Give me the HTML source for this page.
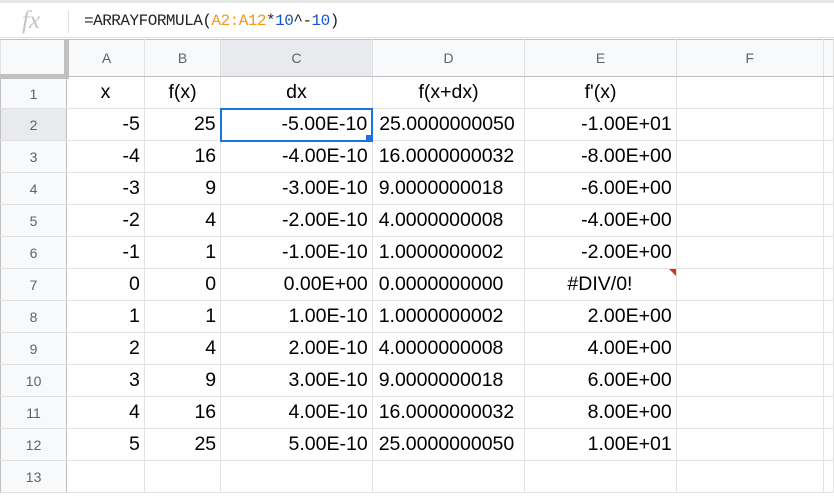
<!DOCTYPE html><html><head><style>
body{margin:0;width:834px;height:496px;overflow:hidden;background:#fff;font-family:"Liberation Sans",Arial,sans-serif;position:relative}
.fb{position:absolute;left:0;top:0;width:834px;height:38px;border-top:3px solid #e8e8e8;box-sizing:border-box;border-bottom:1px solid #e0e0e0}
.fx{position:absolute;left:22px;top:4px;font:italic 25px "Liberation Serif",serif;color:#c4c4c4}
.sep{position:absolute;left:68px;top:8px;width:1px;height:22px;background:#ddd}
.ft{position:absolute;left:84px;top:9px;font:16px "Liberation Mono","DejaVu Sans Mono",monospace;color:#222;letter-spacing:-0.5px}
table{position:absolute;left:0;top:39px;border-collapse:collapse;table-layout:fixed}
td{border:1px solid #e2e2e2;height:32px;padding:0 4px;font-size:19.5px;color:#000;text-align:right;white-space:nowrap;overflow:hidden;box-sizing:border-box}
tr.h td{background:#f8f9fa;color:#5f6368;font-size:14px;text-align:center;height:37px;border-color:#c0c0c0 #e0e0e0}
td.r{background:#f8f9fa;color:#5f6368;font-size:14px;text-align:center;border-color:#e0e0e0 #c0c0c0}
td.c{text-align:center}
td.l{text-align:left;padding-left:6px}
</style></head><body>
<div class="fb"><div class="fx">fx</div><div class="sep"></div><div class="ft">=ARRAYFORMULA(<span style="color:#f7981d">A2:A12</span>*<span style="color:#1155cc">10</span>^-<span style="color:#1155cc">10</span>)</div></div>
<table>
<colgroup><col style="width:68px"><col style="width:80px"><col style="width:78px"><col style="width:154px"><col style="width:153px"><col style="width:153px"><col style="width:153px"><col style="width:10px"></colgroup>
<tr class="h"><td style="border-right:5px solid #c0c0c0;border-bottom:5px solid #c0c0c0;background:#f8f9fa"></td><td>A</td><td>B</td><td style="background:#e8eaed">C</td><td>D</td><td>E</td><td>F</td><td></td></tr>
<tr><td class="r">1</td><td class="c">x</td><td class="c">f(x)</td><td class="c">dx</td><td class="c">f(x+dx)</td><td class="c">f'(x)</td><td></td><td></td></tr>
<tr><td class="r" style="background:#e8eaed">2</td><td>-5</td><td>25</td><td style="border:2px solid #1a73e8;position:relative">-5.00E-10<div style="position:absolute;right:-1px;bottom:-1px;width:6px;height:6px;background:#1a73e8"></div></td><td class="l">25.0000000050</td><td>-1.00E+01</td><td></td><td></td></tr>
<tr><td class="r">3</td><td>-4</td><td>16</td><td>-4.00E-10</td><td class="l">16.0000000032</td><td>-8.00E+00</td><td></td><td></td></tr>
<tr><td class="r">4</td><td>-3</td><td>9</td><td>-3.00E-10</td><td class="l">9.0000000018</td><td>-6.00E+00</td><td></td><td></td></tr>
<tr><td class="r">5</td><td>-2</td><td>4</td><td>-2.00E-10</td><td class="l">4.0000000008</td><td>-4.00E+00</td><td></td><td></td></tr>
<tr><td class="r">6</td><td>-1</td><td>1</td><td>-1.00E-10</td><td class="l">1.0000000002</td><td>-2.00E+00</td><td></td><td></td></tr>
<tr><td class="r">7</td><td>0</td><td>0</td><td>0.00E+00</td><td class="l">0.0000000000</td><td style="text-align:left;padding-left:42px;position:relative">#DIV/0!<div style="position:absolute;right:0;top:0;width:0;height:0;border-top:7px solid #d93025;border-left:7px solid transparent"></div></td><td></td><td></td></tr>
<tr><td class="r">8</td><td>1</td><td>1</td><td>1.00E-10</td><td class="l">1.0000000002</td><td>2.00E+00</td><td></td><td></td></tr>
<tr><td class="r">9</td><td>2</td><td>4</td><td>2.00E-10</td><td class="l">4.0000000008</td><td>4.00E+00</td><td></td><td></td></tr>
<tr><td class="r">10</td><td>3</td><td>9</td><td>3.00E-10</td><td class="l">9.0000000018</td><td>6.00E+00</td><td></td><td></td></tr>
<tr><td class="r">11</td><td>4</td><td>16</td><td>4.00E-10</td><td class="l">16.0000000032</td><td>8.00E+00</td><td></td><td></td></tr>
<tr><td class="r">12</td><td>5</td><td>25</td><td>5.00E-10</td><td class="l">25.0000000050</td><td>1.00E+01</td><td></td><td></td></tr>
<tr><td class="r">13</td><td></td><td></td><td></td><td></td><td></td><td></td><td></td></tr>
</table>
</body></html>
